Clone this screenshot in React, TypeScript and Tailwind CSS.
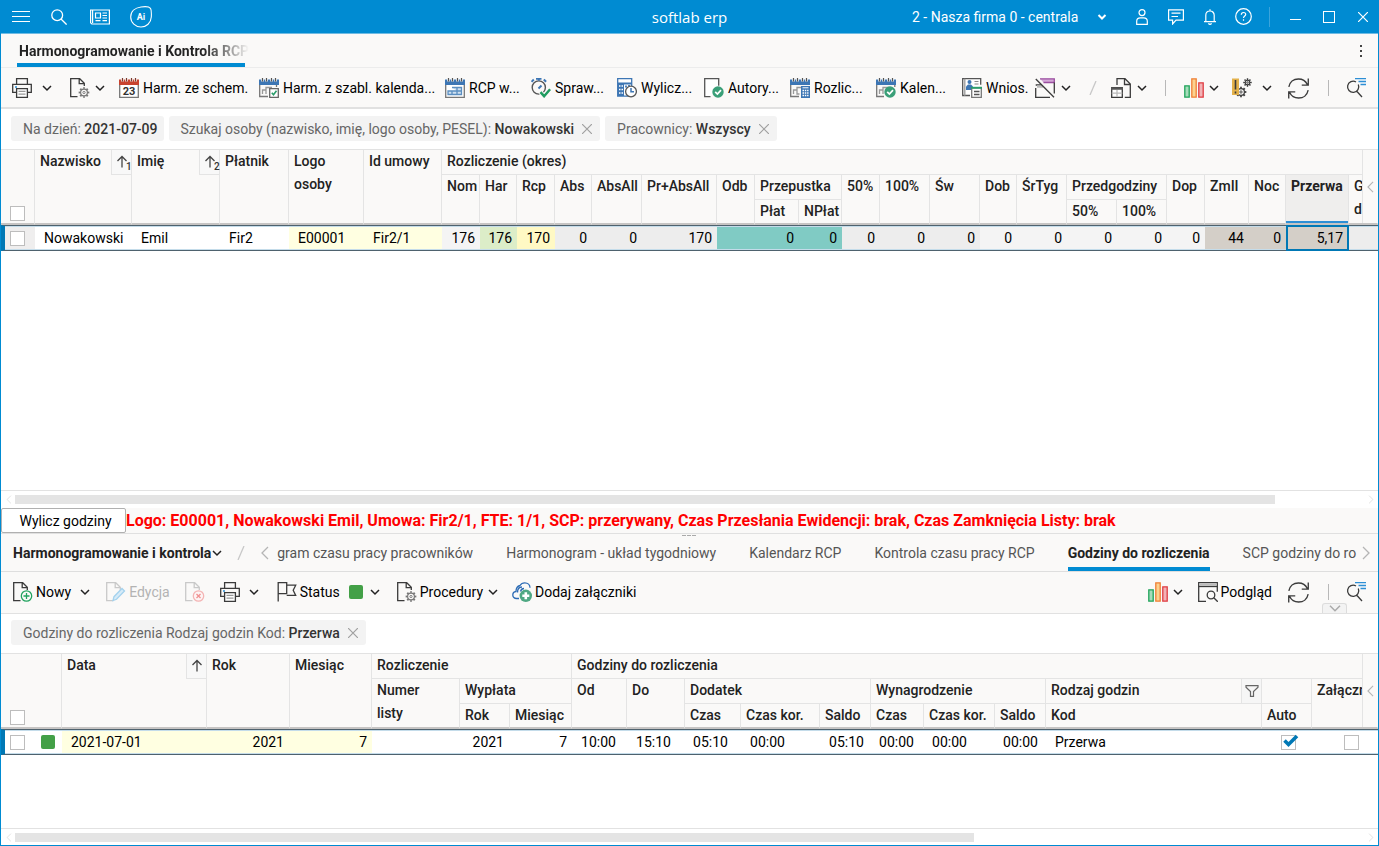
import { useState } from 'react';
import type { ReactNode } from 'react';
import clsx from 'clsx';

type IconProps = { children: ReactNode; className?: string };

const Icon = ({ children, className = 'w-5 h-5' }: IconProps) => (
  <svg viewBox="0 0 20 20" fill="none" stroke="#3b3b3b" strokeWidth="1.3" className={clsx('shrink-0', className)} aria-hidden="true">
    {children}
  </svg>
);

const Chevron = ({ className = 'w-[10px] h-[10px]', color = '#222' }: { className?: string; color?: string }) => (
  <svg viewBox="0 0 10 10" fill="none" stroke={color} strokeWidth="1.5" className={clsx('shrink-0', className)} aria-hidden="true">
    <path d="M1 3l4 4 4-4" />
  </svg>
);

const SideChevron = ({ flip, className, color = '#b5b5b5' }: { flip?: boolean; className?: string; color?: string }) => (
  <svg viewBox="0 0 8 14" fill="none" stroke={color} strokeWidth="1.3" className={clsx('shrink-0', className)} aria-hidden="true">
    <path d={flip ? 'M1 1l6 6-6 6' : 'M7 1L1 7l6 6'} />
  </svg>
);

const CloseX = ({ className = 'w-[10px] h-[10px]', color = '#a0a0a0' }: { className?: string; color?: string }) => (
  <svg viewBox="0 0 10 10" fill="none" stroke={color} strokeWidth="1.2" className={clsx('shrink-0', className)} aria-hidden="true">
    <path d="M0 0l10 10M10 0L0 10" />
  </svg>
);

const Gear = ({ cx, cy, r = 3.6, color = '#777' }: { cx: number; cy: number; r?: number; color?: string }) => (
  <g stroke={color}>
    <circle cx={cx} cy={cy} r={r} strokeWidth="1.2" fill="#faf9f8" />
    <circle cx={cx} cy={cy} r={r + 1.1} strokeWidth="1.7" pathLength="32" strokeDasharray="2 2" strokeDashoffset="1" />
    <circle cx={cx} cy={cy} r={r / 3} strokeWidth="0.9" />
  </g>
);

// Sheet with a folded corner, open at the lower right where a badge sits
const Sheet = ({ color = '#3b3b3b' }: { color?: string }) => (
  <path stroke={color} d="M7.5 18.6H.7V.7h9l4.6 4.6v2.7M9.2.7v5h5" />
);

const CalendarTop = ({ color = '#3d76b4' }: { color?: string }) => (
  <>
    <path d="M0 1.5h20v5.5H0z" fill={color} stroke="none" />
    <path d="M3.5 0v3.5M7.5 0v3.5M12.5 0v3.5M16.5 0v3.5" stroke="#faf9f8" strokeWidth="2.6" />
    <path d="M3.5 0v3.5M7.5 0v3.5M12.5 0v3.5M16.5 0v3.5" stroke={color === '#3d76b4' ? '#555' : '#7c3b30'} strokeWidth="1.2" />
  </>
);

const OkBadge = () => (
  <>
    <circle cx="14" cy="14" r="5.7" fill="#3a9f78" stroke="none" />
    <path d="M11.2 13.8l2.2 2.3 3.6-4" stroke="#fff" strokeWidth="1.7" />
  </>
);

const PrinterIcon = () => (
  <Icon>
    <path d="M4.6 6V.7h10.8V6M4.5 14.4H.7V6.4h18.6v8h-3.8" />
    <path d="M4.6 10.6h10.8v8.7H4.6z" fill="#fff" />
    <path d="M6.5 13.4h7M6.5 16.2h7" stroke="#999" />
    <path d="M3 9h2" stroke="#2d8fd5" strokeWidth="1.6" />
  </Icon>
);

const SheetGearIcon = () => (
  <Icon>
    <Sheet />
    <Gear cx={14} cy={14.5} r={3.4} />
  </Icon>
);

const ChartIcon = () => (
  <Icon>
    <path d="M.8 7.8h4.4v11.4H.8z" fill="#a5dcba" stroke="#1fa35a" />
    <path d="M7.8.8h4.4v18.4H7.8z" fill="#fbd28f" stroke="#ef7f35" />
    <path d="M14.8 4.8h4.4v14.4h-4.4z" fill="#f2b3b6" stroke="#df3c42" />
  </Icon>
);

const RefreshIcon = () => (
  <Icon className="w-[21px] h-[21px]">
    <path d="M.8 8.5C1.6 3.9 5.3.9 9.9.9c3.9 0 7 2 8.5 5.3M19.3.5v6.3h-6.2M19.2 11.5c-.9 4.6-4.5 7.6-9.1 7.6-3.9 0-7-2-8.5-5.3M.7 19.5v-6.3h6.2" />
  </Icon>
);

const SearchLinesIcon = () => (
  <Icon>
    <path d="M9 .6h11M12.5 3.6H20M14.5 6.6H20" stroke="#2d8fd5" strokeWidth="1.5" />
    <path d="M10 4a5.6 5.6 0 1 0 2.300 2.600M11 13.500l5 5.500" />
  </Icon>
);

const actions: { label: string; width: string; icon: ReactNode }[] = [
  {
    label: 'Harm. ze schem.',
    width: 'w-[140px]',
    icon: (
      <Icon>
        <path d="M.7 6v13.3h18.6V6" fill="#fff" stroke="#777" />
        <CalendarTop color="#c8432f" />
        <text x="10" y="17" textAnchor="middle" fontSize="11" fontWeight="700" fill="#333" stroke="none" fontFamily="Roboto">23</text>
      </Icon>
    ),
  },
  {
    label: 'Harm. z szabl. kalenda...',
    width: 'w-[186px]',
    icon: (
      <Icon>
        <path d="M9 18.5H.7V6M17.5 6v3" stroke="#777" />
        <CalendarTop />
        <path d="M3.5 16v-4H7V9.5h6M7 12v4" stroke="#999" />
        <path d="M10.7 10.7h8.6v8.6h-8.6z" fill="#fff" stroke="#666" />
        <path d="M12.8 14.8l1.7 2 3-4" stroke="#2a9d6b" strokeWidth="1.6" />
      </Icon>
    ),
  },
  {
    label: 'RCP w...',
    width: 'w-[86px]',
    icon: (
      <Icon>
        <path d="M.7 6v13.3h18.6V6" fill="#fff" stroke="#777" />
        <CalendarTop />
        <path d="M3 13h4v3.5H3zM7 13h5v3.5H7zM12 9.5h4.5V13H12zM12 13h4.5v3.5H12zM7 9.5h5V13" fill="#cfe0f0" stroke="#5b8ec0" />
      </Icon>
    ),
  },
  {
    label: 'Spraw...',
    width: 'w-[86px]',
    icon: (
      <Icon>
        <circle cx="7.8" cy="9.5" r="6.6" stroke="#555" strokeWidth="1.4" />
        <path d="M5 .8h5.5M7.8.8v2M.5 3.8l2.300-2.300M12.800 1.500l2.300 2.300" stroke="#3d76b4" strokeWidth="2" />
        <path d="M7.5 10.5l3-3" stroke="#3d76b4" strokeWidth="2" />
        <path d="M9.5 14.2l3.6 4 6-7" stroke="#faf9f8" strokeWidth="4.5" />
        <path d="M9.5 14.2l3.6 4 6-7" stroke="#1f9c60" strokeWidth="2.5" />
      </Icon>
    ),
  },
  {
    label: 'Wylicz...',
    width: 'w-[87px]',
    icon: (
      <Icon>
        <path d="M.7.7h14v17.5H.7z" fill="#fff" stroke="#3d76b4" />
        <path d="M1 5h6v13H1z" fill="#3d76b4" stroke="none" />
        <path d="M2 8h4.5M2 11.500h4.5M2 15h4.5" stroke="#fff" strokeDasharray="1.5 1" />
        <path d="M1 5.5h13.500M9 9.500v-2M12 8V7" stroke="#3d76b4" strokeWidth="1.8" />
        <circle cx="14" cy="13.5" r="5.4" fill="#fff" stroke="#555" />
        <path d="M14 10v3.8h3" stroke="#3d76b4" strokeWidth="1.5" />
      </Icon>
    ),
  },
  {
    label: 'Autory...',
    width: 'w-[86px]',
    icon: (
      <Icon>
        <path d="M6.5 18.6H.7V.7h14v7" fill="#fff" stroke="#555" />
        <OkBadge />
      </Icon>
    ),
  },
  {
    label: 'Rozlic...',
    width: 'w-[86px]',
    icon: (
      <Icon>
        <path d="M9 18.5H.7V6" stroke="#777" />
        <CalendarTop />
        <path d="M3.5 16v-4H7V9.5h4M7 12v4h2.5" stroke="#999" />
        <path d="M11 8h9v12h-9z" fill="#3d76b4" stroke="none" />
        <path d="M12.5 12.5h6M12.5 15h6M12.5 17.500h6" stroke="#fff" strokeDasharray="1.5 .8" />
        <path d="M12.5 9.8h6" stroke="#fff" strokeWidth="1" />
      </Icon>
    ),
  },
  {
    label: 'Kalen...',
    width: 'w-[86px]',
    icon: (
      <Icon>
        <path d="M8 18.5H.7V6M18.8 6v3" stroke="#777" />
        <CalendarTop />
        <path d="M3.5 16v-4H7V9.5h6M7 12v4" stroke="#999" />
        <OkBadge />
      </Icon>
    ),
  },
  {
    label: 'Wnios.',
    width: 'w-[73px]',
    icon: (
      <Icon>
        <path d="M8 17.5H.7V.7h18v6" fill="#fff" stroke="#555" />
        <path d="M2.8.7v17" stroke="#999" />
        <circle cx="7.5" cy="4" r="2" fill="#3d76b4" stroke="none" />
        <path d="M4 12V8.5l2-2h3l2 2V12z" fill="#3d76b4" stroke="none" />
        <path d="M12.5 3.5h4M12.5 6h4" stroke="#888" strokeWidth="1" />
        <path d="M9.7 9.7h9.6v9.6H9.7z" fill="#fff" stroke="#777" />
        <path d="M9 9.8h11" stroke="#2a9d6b" strokeWidth="2" />
        <path d="M12 13.5h5.5M12 16.5h5.5" stroke="#555" />
      </Icon>
    ),
  },
];

const Divider = () => <span className="w-px h-4 bg-[#b8b8b8]" />;

const Slash = () => (
  <svg viewBox="0 0 8 14" className="w-2 h-[14px] shrink-0" stroke="#c8c8c8" strokeWidth="1.3" aria-hidden="true">
    <path d="M7 0L1 14" />
  </svg>
);

const Check = ({ label, checked = false }: { label: string; checked?: boolean }) => {
  const [on, setOn] = useState(checked);
  return (
    <label className="relative block w-[15px] h-[15px]">
      <input
        type="checkbox"
        aria-label={label}
        checked={on}
        onChange={(e) => setOn(e.target.checked)}
        className="block w-[15px] h-[15px] appearance-none bg-white border border-[#bdbdbd]"
      />
      {on && (
        <svg viewBox="0 0 16 14" className="absolute -top-px left-[2px] w-4 h-[14px] pointer-events-none" fill="none" stroke="#0078b5" strokeWidth="3.6" aria-hidden="true">
          <path d="M1.500 6.500l4 4L14 2" />
        </svg>
      )}
    </label>
  );
};

const Chip = ({ name, value, closable }: { name: string; value: string; closable?: boolean }) => (
  <div className="flex items-center h-[25px] pl-3 rounded-[3px] bg-[#f3f3f3] text-[#666] whitespace-nowrap">
    <span>
      {name} <b className="font-medium text-[#333]">{value}</b>
    </span>
    {closable ? (
      <button className="px-2 h-full" aria-label={`Usuń filtr ${value}`}>
        <CloseX />
      </button>
    ) : (
      <span className="w-[6px]" />
    )}
  </div>
);

type Head = { text?: string; cols?: number; rows?: number; tool?: ReactNode; active?: boolean };

const Th = ({ text, cols = 1, rows = 1, tool, active, last }: Head & { last: boolean }) => (
  <th
    colSpan={cols}
    rowSpan={rows}
    className={clsx(
      'p-0 align-top text-left text-[#222] border-r border-[#e4e4e4]',
      last ? 'border-b-2 border-b-[#c6c4c3]' : 'border-b',
      active ? 'bg-[#efeeed] font-bold shadow-[inset_0_-2px_#2d8fd5]' : 'font-medium',
    )}
  >
    <div className="flex justify-between items-start">
      <span className="pl-[5px] leading-[23px] whitespace-pre">{text}</span>
      {tool}
    </div>
  </th>
);

const SortButton = ({ order }: { order?: number }) => (
  <button className="flex items-center justify-center w-5 h-[25px] border-l border-b border-[#e4e4e4] bg-[#f8f8f8]" aria-label="Sortuj">
    <svg viewBox="0 0 16 18" className="w-4 h-[18px] overflow-visible" fill="none" stroke="#444" strokeWidth="1.3" aria-hidden="true">
      <path d="M8 14.500V4M3.500 8L8 3.500 12.500 8" />
      {order && <text x="12" y="17" fontSize="10" fill="#333" stroke="none" fontFamily="Roboto">{order}</text>}
    </svg>
  </button>
);

const rowLines = 'h-[26px] p-0 leading-[22px] border-y border-[#4e626e] shadow-[inset_0_1px_#c4dcea,inset_0_-1px_#c4dcea]';

const ColumnHandle = () => (
  <button className="absolute top-0 right-0 w-4 h-[73px] flex items-center justify-center bg-[#faf9f8] border-l border-[#e4e4e4]" aria-label="Pokaż kolumny">
    <SideChevron className="w-[7px] h-3" />
  </button>
);

const mainCols = [
  'w-[34px]', 'w-[97px]', 'w-[88px]', 'w-[69px]', 'w-[75px]', 'w-[78px]', 'w-[38px]', 'w-[37px]', 'w-[38px]',
  'w-[37px]', 'w-[50px]', 'w-[75px]', 'w-[38px]', 'w-[44px]', 'w-[43px]', 'w-[38px]', 'w-[50px]', 'w-[50px]',
  'w-[37px]', 'w-[50px]', 'w-[50px]', 'w-[50px]', 'w-[38px]', 'w-[44px]', 'w-[37px]', 'w-[63px]', 'w-auto',
];

const mainHead: Head[][] = [
  [
    { text: 'Nazwisko', rows: 3, tool: <SortButton order={1} /> },
    { text: 'Imię', rows: 3, tool: <SortButton order={2} /> },
    { text: 'Płatnik', rows: 3 },
    { text: 'Logo\nosoby', rows: 3 },
    { text: 'Id umowy', rows: 3 },
    { text: 'Rozliczenie (okres)', cols: 21 },
  ],
  [
    { text: 'Nom', rows: 2 },
    { text: 'Har', rows: 2 },
    { text: 'Rcp', rows: 2 },
    { text: 'Abs', rows: 2 },
    { text: 'AbsAll', rows: 2 },
    { text: 'Pr+AbsAll', rows: 2 },
    { text: 'Odb', rows: 2 },
    { text: 'Przepustka', cols: 2 },
    { text: '50%', rows: 2 },
    { text: '100%', rows: 2 },
    { text: 'Św', rows: 2 },
    { text: 'Dob', rows: 2 },
    { text: 'ŚrTyg', rows: 2 },
    { text: 'Przedgodziny', cols: 2 },
    { text: 'Dop', rows: 2 },
    { text: 'ZmII', rows: 2 },
    { text: 'Noc', rows: 2 },
    { text: 'Przerwa', rows: 2, active: true },
    { text: 'G\ndo', rows: 2 },
  ],
  [{ text: 'Płat' }, { text: 'NPłat' }, { text: '50%' }, { text: '100%' }],
];

const mainRow: [string, string][] = [
  ['Nowakowski', 'pl-[9px]'],
  ['Emil', 'pl-[9px]'],
  ['Fir2', 'pl-[9px]'],
  ['E00001', 'pl-[9px] bg-[#ffffe1]'],
  ['Fir2/1', 'pl-[9px] bg-[#ffffe1]'],
  ['176', 'text-right pr-[5px] bg-[#f4f4f4]'],
  ['176', 'text-right pr-[5px] bg-[#dcedc8]'],
  ['170', 'text-right pr-[5px] bg-[#fff9c4]'],
  ['0', 'text-right pr-[5px] bg-[#ededed]'],
  ['0', 'text-right pr-[5px] bg-[#ededed]'],
  ['170', 'text-right pr-[5px] bg-[#ededed]'],
  ['', 'bg-[#80cbc4]'],
  ['0', 'text-right pr-[5px] bg-[#80cbc4]'],
  ['0', 'text-right pr-[5px] bg-[#80cbc4]'],
  ['0', 'text-right pr-[5px] bg-[#ededed]'],
  ['0', 'text-right pr-[5px] bg-[#ededed]'],
  ['0', 'text-right pr-[5px] bg-[#ededed]'],
  ['0', 'text-right pr-[5px] bg-[#f4f4f4]'],
  ['0', 'text-right pr-[5px] bg-[#f4f4f4]'],
  ['0', 'text-right pr-[5px] bg-[#f4f4f4]'],
  ['0', 'text-right pr-[5px] bg-[#f4f4f4]'],
  ['0', 'text-right pr-[5px] bg-[#f4f4f4]'],
  ['44', 'text-right pr-[5px] bg-[#d4cfc8]'],
  ['0', 'text-right pr-[5px] bg-[#d4cfc8]'],
  ['5,17', 'text-right pr-[6px] bg-[#d4cfc8] outline-2 -outline-offset-2 outline-[#0078b5]'],
  ['', 'bg-[#ededed]'],
];

const detailCols = [
  'w-[34px]', 'w-[27px]', 'w-[145px]', 'w-[83px]', 'w-[82px]', 'w-[88px]', 'w-[50px]', 'w-[62px]', 'w-[55px]', 'w-[58px]',
  'w-[56px]', 'w-[79px]', 'w-[51px]', 'w-[53px]', 'w-[71px]', 'w-[51px]', 'w-[216px]', 'w-[50px]', 'w-auto',
];

const FilterButton = () => (
  <button className="flex items-center justify-center w-5 h-6 border-l border-[#e4e4e4] bg-[#f6f6f6]" aria-label="Filtruj">
    <svg viewBox="0 0 14 12" className="w-[14px] h-3" fill="none" stroke="#666" strokeWidth="1.2" aria-hidden="true">
      <path d="M1 .7h12v1.500L8.500 6.500v4.800h-3V6.500L1 2.200z" />
    </svg>
  </button>
);

const detailHead: Head[][] = [
  [
    { text: 'Data', rows: 3, tool: <SortButton /> },
    { text: 'Rok', rows: 3 },
    { text: 'Miesiąc', rows: 3 },
    { text: 'Rozliczenie', cols: 3 },
    { text: 'Godziny do rozliczenia', cols: 11 },
  ],
  [
    { text: 'Numer\nlisty', rows: 2 },
    { text: 'Wypłata', cols: 2 },
    { text: 'Od', rows: 2 },
    { text: 'Do', rows: 2 },
    { text: 'Dodatek', cols: 3 },
    { text: 'Wynagrodzenie', cols: 3 },
    { text: 'Rodzaj godzin', tool: <FilterButton /> },
    { text: '' },
    { text: 'Załączniki', rows: 2 },
  ],
  [
    { text: 'Rok' },
    { text: 'Miesiąc' },
    { text: 'Czas' },
    { text: 'Czas kor.' },
    { text: 'Saldo' },
    { text: 'Czas' },
    { text: 'Czas kor.' },
    { text: 'Saldo' },
    { text: 'Kod' },
    { text: 'Auto' },
  ],
];

const detailRow: [string, string][] = [
  ['2021-07-01', 'pl-[9px] bg-[#ffffe1]'],
  ['2021', 'text-right pr-[6px] bg-[#ffffe1]'],
  ['7', 'text-right pr-[5px] bg-[#ffffe1]'],
  ['', ''],
  ['2021', 'text-right pr-[6px]'],
  ['7', 'text-right pr-[5px]'],
  ['10:00', 'pl-[9px]'],
  ['15:10', 'pl-[9px]'],
  ['05:10', 'pl-[8px]'],
  ['00:00', 'pl-[9px]'],
  ['05:10', 'pl-[9px]'],
  ['00:00', 'pl-[8px]'],
  ['00:00', 'pl-[8px]'],
  ['00:00', 'pl-[8px]'],
  ['Przerwa', 'pl-[9px]'],
];

const HeadRows = ({ rows, firstSpan }: { rows: Head[][]; firstSpan: number }) => (
  <thead className="bg-[#faf9f8]">
    {rows.map((cells, r) => (
      <tr key={r} className="h-[25px]">
        {r === 0 && (
          <th rowSpan={3} colSpan={firstSpan} className="pl-[9px] pb-[2px] align-bottom border-r border-b-2 border-[#e4e4e4] border-b-[#c6c4c3]">
            <Check label="Zaznacz wszystkie" />
          </th>
        )}
        {cells.map((c, i) => (
          <Th key={i} {...c} last={r + (c.rows ?? 1) === 3} />
        ))}
      </tr>
    ))}
  </thead>
);

const Scrollbar = ({ thumb, height }: { thumb: string; height: string }) => (
  <div className={clsx('flex items-center shrink-0 border-t border-[#e2e2e2] pl-[5px] pr-1 gap-[3px] bg-white', height)}>
    <SideChevron className="w-[6px] h-[9px]" color="#dcdcdc" />
    <div className="flex-1">
      <div className={clsx('h-[9px] bg-[#e4e4e4]', thumb)} />
    </div>
    <SideChevron flip className="w-[6px] h-[9px]" color="#dcdcdc" />
  </div>
);

const TitleBar = () => (
  <header className="grid grid-cols-[1fr_auto_1fr] items-center h-[33px] shrink-0 bg-[#008bd2] text-white">
    <div className="flex items-center pl-[10px]">
      <button className="w-5 mr-5" aria-label="Menu">
        <svg viewBox="0 0 20 12" className="block w-5 h-3" stroke="#fff" strokeWidth="1" aria-hidden="true">
          <path d="M1 .5h18M1 5.500h18M1 10.500h18" />
        </svg>
      </button>
      <button className="mr-[23px]" aria-label="Szukaj">
        <svg viewBox="0 0 16 16" className="block w-4 h-4" fill="none" stroke="#fff" strokeWidth="1.3" aria-hidden="true">
          <circle cx="6.2" cy="6.2" r="5.4" />
          <path d="M10 10l5.600 5.600" />
        </svg>
      </button>
      <button className="mr-5" aria-label="Aktualności">
        <svg viewBox="0 0 20 16" className="block w-5 h-4" fill="none" stroke="#fff" strokeWidth="1.2" aria-hidden="true">
          <path d="M2.600 1h16.800v14H1.800L.6 13.800V1h2M2.600 1v13M5.500 4h5v5h-5zM12.500 4H17M12.500 6.500H17M12.500 9H17M5.500 11.700h5M12.500 11.700H17" />
        </svg>
      </button>
      <button aria-label="Asystent AI">
        <svg viewBox="0 0 22 22" className="block w-[22px] h-[22px]" fill="none" stroke="#fff" strokeWidth="1.1" aria-hidden="true">
          <path d="M11 1c4-.6 8-.6 9.500 1.300 1 1.500 1 5 .8 8.700C20.900 17 16.500 21 11 21S.7 16.500.7 11 5 1.800 11 1z" />
          <text x="11" y="14" textAnchor="middle" fontSize="9" fontWeight="700" fill="#fff" stroke="none" fontFamily="Roboto">Ai</text>
        </svg>
      </button>
    </div>
    <h1 className="font-['Open_Sans'] text-[15px] leading-5">softlab erp</h1>
    <div className="flex items-center justify-end pr-[10px]">
      <select aria-label="Firma" className="appearance-none bg-transparent">
        <option>2 - Nasza firma 0 - centrala</option>
      </select>
      <svg viewBox="0 0 10 10" className="w-[10px] h-[10px] ml-[18px] mr-[29px]" fill="none" stroke="#fff" strokeWidth="2" aria-hidden="true">
        <path d="M1.500 3L5 6.500 8.500 3" />
      </svg>
      <button className="mr-5" aria-label="Użytkownik">
        <svg viewBox="0 0 12 16" className="block w-3 h-4" fill="none" stroke="#fff" strokeWidth="1.2" aria-hidden="true">
          <circle cx="6" cy="3.6" r="3" />
          <path d="M.7 15.400v-3.200c0-2 1.600-3.400 3.600-3.400h3.400c2 0 3.600 1.400 3.600 3.400v3.200z" />
        </svg>
      </button>
      <button className="mr-5" aria-label="Wiadomości">
        <svg viewBox="0 0 16 16" className="block w-4 h-4" fill="none" stroke="#fff" strokeWidth="1.2" aria-hidden="true">
          <path d="M.6.8h14.800v10.400H8L4.600 15v-3.800h-4zM3.500 4.200h9M3.500 7.500h6.500" />
        </svg>
      </button>
      <button className="mr-[19px]" aria-label="Powiadomienia">
        <svg viewBox="0 0 12 16" className="block w-3 h-4" fill="none" stroke="#fff" strokeWidth="1.2" aria-hidden="true">
          <path d="M0 12.700h12M1.800 12.500V6.300C1.800 3.800 3.600 2 6 2s4.200 1.800 4.200 4.300v6.200M6 2V.2M4.500 14.200c.3.800.8 1.200 1.500 1.200s1.200-.4 1.500-1.200" />
        </svg>
      </button>
      <button className="mr-[17px]" aria-label="Pomoc">
        <svg viewBox="0 0 17 17" className="block w-[17px] h-[17px]" fill="none" stroke="#fff" strokeWidth="1.2" aria-hidden="true">
          <circle cx="8.5" cy="8.5" r="7.8" />
          <path d="M6.300 6.800c0-1.500 1-2.300 2.200-2.300s2.200.8 2.200 2c0 1.500-2.200 1.700-2.200 3.500M8.500 11.300v1.500" />
        </svg>
      </button>
      <span className="w-px h-5 bg-[#3ba4dc]" />
      <button className="ml-5 mr-[22px]" aria-label="Minimalizuj">
        <svg viewBox="0 0 11 12" className="block w-[11px] h-3" stroke="#fff" aria-hidden="true"><path d="M0 8.500h11" /></svg>
      </button>
      <button className="mr-[23px]" aria-label="Maksymalizuj">
        <span className="block w-3 h-3 border border-white" />
      </button>
      <button aria-label="Zamknij">
        <CloseX color="#fff" />
      </button>
    </div>
  </header>
);

const MainToolbar = () => (
  <div className="flex items-center shrink-0 h-[41px] pt-px pl-[11px] pr-3 border-b-2 border-[#e1e1e1] bg-[#faf9f8]">
    <button className="flex items-center gap-[10px] mr-[18px]" aria-label="Drukuj">
      <PrinterIcon />
      <Chevron />
    </button>
    <button className="flex items-center gap-[5px] mr-[14px]" aria-label="Dokumenty">
      <SheetGearIcon />
      <Chevron />
    </button>
    {actions.map((a) => (
      <button key={a.label} className={clsx('flex shrink-0 items-center gap-1 whitespace-nowrap text-black', a.width)}>
        {a.icon}
        {a.label}
      </button>
    ))}
    <button className="flex items-center gap-[6px] mr-[18px]" aria-label="Okna">
      <Icon>
        <path d="M5 .8h14.300v3.700H8.500" fill="#d4a9d8" stroke="#9b4fa0" />
        <path d="M19.300 4.500v11M15 19.300H.7V10M.7 7h6" />
        <path d="M2 8.500h6" stroke="#bbb" strokeWidth="2.5" />
        <path d="M.8 1L19 19.200" />
      </Icon>
      <Chevron />
    </button>
    <Slash />
    <button className="flex items-center gap-[6px] ml-[14px]" aria-label="Widok">
      <Icon>
        <path d="M6 7V.7h8l5.300 5.300v13.300h-5.500M13.500.7v5.800h5.800" />
        <path d="M.7 9.700h10.600v9.600H.7z" fill="#fff" />
        <path d="M0 10.500h12" strokeWidth="2.5" stroke="#555" />
        <path d="M.7 15.200h10.600M6 12v7" stroke="#bbb" />
      </Icon>
      <Chevron />
    </button>
    <div className="flex flex-1 items-center justify-end">
      <Divider />
      <button className="flex items-center gap-[5px] ml-[18px] mr-[13px]" aria-label="Wykres">
        <ChartIcon />
        <Chevron />
      </button>
      <button className="flex items-center gap-[10px] mr-4" aria-label="Narzędzia">
        <Icon>
          <Gear cx={9} cy={14} r={3.4} color="#3b3b3b" />
          <Gear cx={15.5} cy={4.5} r={2.3} color="#3b3b3b" />
          <path d="M0 .5h7v16.500H0z" fill="#e3b14b" stroke="none" />
          <path d="M3.500 2v9.500M3.500 13.500v2" strokeWidth="1.6" />
        </Icon>
        <Chevron />
      </button>
      <button className="mr-[19px]" aria-label="Odśwież">
        <RefreshIcon />
      </button>
      <Divider />
      <button className="ml-[17px]" aria-label="Wyszukaj">
        <SearchLinesIcon />
      </button>
    </div>
  </div>
);

const DetailToolbar = () => (
  <div className="relative flex items-center shrink-0 h-[42px] pb-px pl-3 pr-3 border-b border-[#e1e1e1] bg-[#faf9f8] text-black">
    <button className="flex items-center gap-[3px] mr-4">
      <Icon>
        <Sheet />
        <circle cx="13.5" cy="14" r="5.2" stroke="#22a35f" fill="#faf9f8" />
        <path d="M13.500 11v6M10.500 14h6" stroke="#22a35f" />
      </Icon>
      Nowy
      <Chevron className="w-[10px] h-[10px] ml-[6px]" />
    </button>
    <button className="flex items-center gap-[3px] mr-[15px] text-[#b3b3b3]" disabled>
      <Icon>
        <Sheet color="#c9c9c9" />
        <path d="M7 18.500l1-3.800L16 6.500l2.500 2.500-8 8.300z" fill="#d6ebf8" stroke="#a4d2ee" />
      </Icon>
      Edycja
    </button>
    <button className="mr-[15px]" disabled aria-label="Usuń">
      <Icon>
        <Sheet color="#c9c9c9" />
        <circle cx="13.5" cy="14" r="5.2" stroke="#f4b4b4" fill="#fdf4f4" />
        <path d="M11.500 12l4 4M15.500 12l-4 4" stroke="#f08f8f" />
      </Icon>
    </button>
    <button className="flex items-center gap-[9px] mr-[18px]" aria-label="Drukuj">
      <PrinterIcon />
      <Chevron />
    </button>
    <button className="flex items-center gap-[3px] mr-[17px]">
      <Icon>
        <path d="M1.200 19.500V.7h8.500v11H1.200M9.700 3.200h9l-2.500 5 2.500 5.200h-9" />
      </Icon>
      Status
      <span className="w-[14px] h-[14px] ml-[6px] mr-1 rounded-[2px] bg-[#43a047]" />
      <Chevron />
    </button>
    <button className="flex items-center gap-[3px] mr-[14px]">
      <SheetGearIcon />
      Procedury
      <Chevron className="w-[10px] h-[10px] ml-[2px]" />
    </button>
    <button className="flex items-center gap-[3px]">
      <Icon>
        <path d="M7 16.500H4.500C2.300 16.500.8 15 .8 13s1.500-3.300 3.200-3.500C4 6 6 4 8 3.500 9 1.700 10.800.8 12.800.8c3 0 5.200 2.200 5.200 5M5.500 10.500c0-3.500 2-5.500 4.500-5.500M8.500 9.500c.5-2 2-3 3.500-3" stroke="#2d6cb5" />
        <circle cx="13.8" cy="13.8" r="6.2" fill="#4fa883" stroke="none" />
        <path d="M13.800 10.300v7M10.300 13.800h7" stroke="#fff" strokeWidth="2.6" />
      </Icon>
      Dodaj załączniki
    </button>
    <div className="flex flex-1 items-center justify-end">
      <button className="flex items-center gap-[5px] mr-[15px]" aria-label="Wykres">
        <ChartIcon />
        <Chevron />
      </button>
      <button className="flex items-center gap-[3px] mr-4">
        <Icon>
          <path d="M8 19.300H.7V.7h18.600v9" />
          <path d="M1 2.500h18" stroke="#bbb" strokeWidth="2" />
          <path d="M.7 4.500h18.600" />
          <circle cx="13" cy="13" r="3.8" fill="#faf9f8" />
          <path d="M15.800 15.800l4 4" />
        </Icon>
        Podgląd
      </button>
      <button className="mr-[19px]" aria-label="Odśwież">
        <RefreshIcon />
      </button>
      <Divider />
      <button className="ml-[17px]" aria-label="Wyszukaj">
        <SearchLinesIcon />
      </button>
    </div>
    <button className="absolute right-[31px] bottom-0 flex items-center justify-center w-[25px] h-[10px] rounded-t-[3px] border border-b-0 border-[#dcdcdc] bg-[#f3f3f3]" aria-label="Zwiń">
      <svg viewBox="0 0 12 7" className="w-3 h-[7px]" fill="none" stroke="#aaa" strokeWidth="1.5" aria-hidden="true">
        <path d="M1 .8l5 5 5-5" />
      </svg>
    </button>
  </div>
);

const tabs = [
  'gram czasu pracy pracowników',
  'Harmonogram - układ tygodniowy',
  'Kalendarz RCP',
  'Kontrola czasu pracy RCP',
  'Godziny do rozliczenia',
  'SCP godziny do ro',
];

const DetailTabs = () => {
  const [active, setActive] = useState('Godziny do rozliczenia');
  return (
    <nav className="relative flex items-center shrink-0 h-[38px] pl-3 pr-2 border-b border-[#dedede] bg-[#faf9f8]">
      <span className="absolute top-px left-1/2 flex gap-px -translate-x-2" aria-hidden="true">
        <i className="w-1 h-px bg-[#aaa]" />
        <i className="w-1 h-px bg-[#aaa]" />
        <i className="w-1 h-px bg-[#aaa]" />
      </span>
      <button className="flex items-center gap-px mr-[15px] font-bold text-[#222] whitespace-nowrap">
        Harmonogramowanie i kontrola
        <Chevron />
      </button>
      <Slash />
      <button className="ml-4" aria-label="Poprzednie">
        <SideChevron className="w-2 h-[14px]" />
      </button>
      <div className="flex flex-1 min-w-0 gap-[33px] h-full ml-2 mr-1 overflow-hidden">
        {tabs.map((t) => (
          <button
            key={t}
            onClick={() => setActive(t)}
            className={clsx(
              'shrink-0 h-full border-b-4 pt-1 whitespace-nowrap',
              t === active ? 'border-[#008bd2] font-bold text-[#222]' : 'border-transparent text-[#555]',
            )}
          >
            {t}
          </button>
        ))}
      </div>
      <button aria-label="Następne">
        <SideChevron flip className="w-2 h-[14px]" />
      </button>
    </nav>
  );
};

export default function App() {
  return (
    <div className="flex flex-col h-screen border border-t-0 border-[#008bd2] bg-white font-['Roboto',sans-serif] text-sm leading-5 overflow-hidden">
      <TitleBar />

      {/* Window tabs */}
      <div className="flex items-end justify-between shrink-0 h-[35px] pl-4 pr-4 border-t border-b border-t-[#6fbbe3] border-b-[#ececec] bg-[#faf9f8]">
        <a href="#rcp" className="w-[228px] h-[30px] pt-1 pl-[2px] whitespace-nowrap border-b-4 border-[#008bd2] font-bold">
          <span className="bg-linear-to-r from-[#222] from-80% to-[#faf9f8] bg-clip-text text-transparent">Harmonogramowanie i Kontrola RCP</span>
        </a>
        <button className="flex flex-col gap-[3px] mb-[10px]" aria-label="Więcej">
          <i className="w-[2px] h-[2px] bg-[#444]" />
          <i className="w-[2px] h-[2px] bg-[#444]" />
          <i className="w-[2px] h-[2px] bg-[#444]" />
        </button>
      </div>

      <MainToolbar />

      <div className="flex items-center shrink-0 gap-[5px] h-10 pb-px px-[10px]">
        <Chip name="Na dzień:" value="2021-07-09" />
        <Chip name="Szukaj osoby (nazwisko, imię, logo osoby, PESEL):" value="Nowakowski" closable />
        <Chip name="Pracownicy:" value="Wszyscy" closable />
      </div>

      <section className="relative flex-1 min-h-0 overflow-hidden border-t border-[#e2e2e2]">
        <table className="w-full table-fixed border-separate border-spacing-0">
          <colgroup>
            {mainCols.map((w, i) => (
              <col key={i} className={w} />
            ))}
          </colgroup>
          <HeadRows rows={mainHead} firstSpan={1} />
          <tbody>
            <tr>
              <td className={clsx(rowLines, 'border-l-4 border-l-[#0078b5] pl-[5px] bg-[#efeeee]')}>
                <Check label="Zaznacz Nowakowski" />
              </td>
              {mainRow.map(([v, style], i) => (
                <td key={i} className={clsx(rowLines, style)}>{v}</td>
              ))}
            </tr>
          </tbody>
        </table>
        <ColumnHandle />
      </section>
      <Scrollbar thumb="w-14/15" height="h-[18px]" />

      {/* Selected employee */}
      <div className="flex items-center shrink-0 h-[26px] border-b border-[#e0e0e0] bg-[#faf9f8]">
        <button className="w-[125px] h-[25px] shrink-0 pl-1 border border-[#b0b0b0] rounded-[2px] bg-white text-black whitespace-nowrap">Wylicz godziny</button>
        <p className="font-bold text-base text-[#f00] whitespace-nowrap">
          Logo: E00001, Nowakowski Emil, Umowa: Fir2/1, FTE: 1/1, SCP: przerywany, Czas Przesłania Ewidencji: brak, Czas Zamknięcia Listy: brak
        </p>
      </div>

      <DetailTabs />
      <DetailToolbar />

      <div className="flex items-center shrink-0 h-[39px] pb-[2px] px-[10px]">
        <Chip name="Godziny do rozliczenia Rodzaj godzin Kod:" value="Przerwa" closable />
      </div>

      <section className="relative shrink-0 h-[175px] overflow-hidden border-t border-[#e2e2e2]">
        <table className="w-full table-fixed border-separate border-spacing-0">
          <colgroup>
            {detailCols.map((w, i) => (
              <col key={i} className={w} />
            ))}
          </colgroup>
          <HeadRows rows={detailHead} firstSpan={2} />
          <tbody>
            <tr>
              <td className={clsx(rowLines, 'border-l-4 border-l-[#0078b5] pl-[5px]')}>
                <Check label="Zaznacz 2021-07-01" />
              </td>
              <td className={clsx(rowLines, 'pl-[6px]')}>
                <span className="block w-[14px] h-[14px] rounded-[2px] bg-[#43a047]" />
              </td>
              {detailRow.map(([v, style], i) => (
                <td key={i} className={clsx(rowLines, style)}>{v}</td>
              ))}
              <td className={clsx(rowLines, 'pl-[19px]')}>
                <Check label="Auto" checked />
              </td>
              <td className={clsx(rowLines, 'pl-8')}>
                <Check label="Załączniki" />
              </td>
            </tr>
          </tbody>
        </table>
        <ColumnHandle />
      </section>
      <Scrollbar thumb="w-[71%]" height="h-[17px]" />
    </div>
  );
}
